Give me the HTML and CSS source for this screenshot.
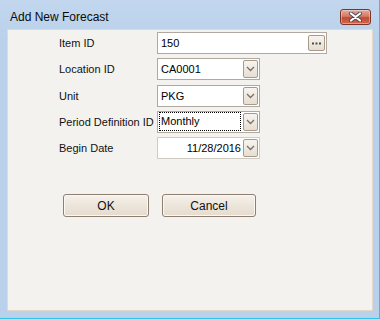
FILE: index.html
```html
<!DOCTYPE html>
<html lang="en">
<head>
  <meta charset="UTF-8" />
  <title>Add New Forecast</title>
  <link rel="stylesheet" href="styles.css">
</head>
<body>
  <div class="window">
    <div class="titlebar">
      <span class="title">Add New Forecast</span>
      <button class="close-btn" aria-label="Close">
        <svg width="15" height="10" viewBox="0 0 15 10">
          <path d="M3 1.5 L12 8.5 M12 1.5 L3 8.5" stroke="#4a4a52" stroke-width="4" stroke-linecap="round" />
          <path d="M3 1.5 L12 8.5 M12 1.5 L3 8.5" stroke="#fff" stroke-width="2.2" stroke-linecap="round" />
        </svg>
      </button>
    </div>

    <div class="panel">
      <div class="form">
        <label>Item ID</label>
        <div class="field field-wide">
          <span class="value">150</span>
          <span class="side-btn ellipsis">
            <svg width="11" height="3" viewBox="0 0 11 3"><rect x="1" y="0.5" width="2" height="2" fill="#4f4a44"/><rect x="4.5" y="0.5" width="2" height="2" fill="#4f4a44"/><rect x="8" y="0.5" width="2" height="2" fill="#4f4a44"/></svg>
          </span>
        </div>

        <label>Location ID</label>
        <div class="field">
          <span class="value">CA0001</span>
          <span class="side-btn drop"><svg width="9" height="6" viewBox="0 0 9 6"><path d="M1 1 L4.5 4.5 L8 1" fill="none" stroke="#7a6f66" stroke-width="1.3"/></svg></span>
        </div>

        <label>Unit</label>
        <div class="field">
          <span class="value">PKG</span>
          <span class="side-btn drop"><svg width="9" height="6" viewBox="0 0 9 6"><path d="M1 1 L4.5 4.5 L8 1" fill="none" stroke="#7a6f66" stroke-width="1.3"/></svg></span>
        </div>

        <label>Period Definition ID</label>
        <div class="field">
          <span class="value focused">Monthly</span>
          <span class="side-btn drop"><svg width="9" height="6" viewBox="0 0 9 6"><path d="M1 1 L4.5 4.5 L8 1" fill="none" stroke="#7a6f66" stroke-width="1.3"/></svg></span>
        </div>

        <label>Begin Date</label>
        <div class="field field-date">
          <span class="value date">11/28/2016</span>
          <span class="side-btn drop"><svg width="9" height="6" viewBox="0 0 9 6"><path d="M1 1 L4.5 4.5 L8 1" fill="none" stroke="#7a6f66" stroke-width="1.3"/></svg></span>
        </div>
      </div>

      <div class="actions">
        <button class="btn btn-ok">OK</button>
        <button class="btn btn-cancel">Cancel</button>
      </div>
    </div>
  </div>
</body>
</html>
```

FILE: styles.css
```css
* { box-sizing: border-box; margin: 0; padding: 0; }
html, body { width: 380px; height: 319px; overflow: hidden; }
body { font-family: "Liberation Sans", Arial, sans-serif; font-size: 11px; color: #000; background: #b9d1ea; }

.window { width: 380px; height: 319px; display: flex; flex-direction: column; background: linear-gradient(#c2d7ee, #b9d1ea 40px); border-right: 1px solid #2cc4ea; border-bottom: 1px solid #2cc4ea; }
.titlebar { height: 29px; display: flex; justify-content: space-between; align-items: flex-start; padding: 0 8px 0 10px; }
.title { font-size: 12px; line-height: 12px; margin-top: 11px; color: #0a0a0a; }
.close-btn { margin-top: 9px; width: 31px; height: 16px; border: 1px solid #7e3328; border-radius: 3px; background: linear-gradient(#e7aa9c, #d37a66 45%, #c04b33 55%, #d06a50); display: flex; align-items: center; justify-content: center; box-shadow: inset 0 0 0 1px rgba(255,255,255,0.35); }

.panel { flex: 1; margin: 0 6px 7px 7px; background: #f4f2ee; border: 1px solid #e2d9cb; padding: 2px 0 0 51px; }

.form { display: grid; grid-template-columns: 98px auto; grid-auto-rows: 22px; row-gap: 4.25px; align-items: center; }
.form label { font-size: 11px; color: #111; }

.field { width: 103px; height: 22px; border: 1px solid #b1a9a0; background: #fff; display: flex; align-items: center; justify-content: space-between; padding: 0 1px 0 2px; }
.field-wide { width: 170px; }
.field-date { border-color: #cfcac3; }
.value { font-size: 11px; padding-left: 1px; line-height: 14px; }
.value.focused { flex: 1; height: 19px; margin-right: 2px; border: 1px dotted #000; margin-left: -1px; line-height: 17px; }
.value.date { flex: 1; text-align: right; padding-right: 2px; }

.side-btn { display: flex; align-items: center; justify-content: center; border: 1px solid #a89a8b; border-radius: 2px; background: linear-gradient(#f7f4ef, #e6ded2); }
.drop { width: 15px; height: 18px; }
.ellipsis { width: 17px; height: 16px; }

.actions { display: flex; gap: 13px; margin: 35px 0 0 4px; }
.btn { height: 23px; border: 1px solid #8f7f70; border-radius: 3px; background: linear-gradient(#f5f2ec, #ece5da 50%, #e5dccf); font-family: "Liberation Sans", Arial, sans-serif; font-size: 12px; color: #111; box-shadow: inset 0 0 0 1px #faf8f4; }
.btn-ok { width: 86px; }
.btn-cancel { width: 94px; }
```
